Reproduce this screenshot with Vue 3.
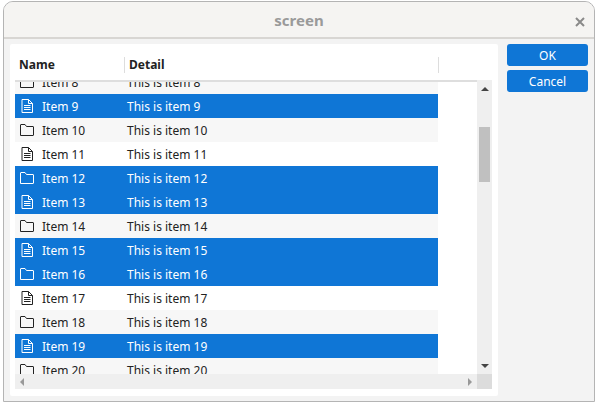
<script setup>
const selected = [9, 12, 13, 15, 16, 19]
const files = [9, 11, 13, 15, 17, 19]
const rows = Array.from({ length: 13 }, (_, i) => {
  const n = i + 8
  return { n, selected: selected.includes(n), file: files.includes(n), striped: n % 2 === 0 }
})
</script>

<template>
  <div class="window">
    <header class="titlebar">
      <span class="title">screen</span>
      <svg class="close" viewBox="0 0 10 10" width="10" height="10">
        <path d="M1 1 L9 9 M9 1 L1 9" stroke="#8a8a8a" stroke-width="2" fill="none" />
      </svg>
    </header>
    <div class="content">
      <section class="panel">
        <div class="head">
          <div class="col-name">Name</div>
          <div class="col-detail">Detail</div>
          <div class="col-rest"></div>
        </div>
        <div class="table-area">
          <div class="viewport">
            <div class="rows">
              <div
                v-for="r in rows"
                :key="r.n"
                class="row"
                :class="{ selected: r.selected, striped: r.striped }"
              >
                <svg v-if="r.file" class="icon" viewBox="0 0 16 16" width="16" height="16">
                  <path d="M3 1.5 H9.5 L13.5 5.5 V14.5 H3 Z M9.5 1.5 V5.5 H13.5 M5 7.5 H11.5 M5 9.5 H11.5 M5 11.5 H11.5" fill="none" stroke="currentColor" stroke-width="1" />
                </svg>
                <svg v-else class="icon" viewBox="0 0 16 16" width="16" height="16">
                  <path d="M1.5 13.5 V3 Q1.5 2.5 2 2.5 H6 L7.5 4.5 H14 Q14.5 4.5 14.5 5 V13 Q14.5 13.5 14 13.5 Z" fill="none" stroke="currentColor" stroke-width="1" />
                </svg>
                <span class="name">Item {{ r.n }}</span>
                <span class="detail">This is item {{ r.n }}</span>
              </div>
            </div>
          </div>
          <div class="vbar">
            <span class="arrow up"></span>
            <span class="thumb"></span>
            <span class="arrow down"></span>
          </div>
          <div class="hbar">
            <span class="arrow left"></span>
            <span class="arrow right"></span>
          </div>
          <div class="corner"></div>
        </div>
      </section>
      <aside class="actions">
        <button class="btn">OK</button>
        <button class="btn">Cancel</button>
      </aside>
    </div>
  </div>
</template>

<style>
html, body { margin: 0; background: #ffffff; }
</style>

<style scoped>
.window {
  box-sizing: border-box;
  width: 592px;
  height: 401px;
  margin: 1px 0 0 3px;
  border: 1px solid #b4b4b4;
  border-radius: 10px 10px 0 0;
  background: #f3f3f3;
  font-family: "Noto Sans", sans-serif;
  font-size: 12px;
  overflow: hidden;
}
.titlebar {
  height: 37px;
  box-sizing: border-box;
  background: #f5f4f2;
  border-bottom: 2px solid #d8d6d3;
  display: flex;
  align-items: center;
  justify-content: center;
  position: relative;
}
.title { font-weight: 700; font-size: 15px; color: #9a9a9a; }
.close { position: absolute; right: 9px; top: 15px; }
.content {
  display: flex;
  padding: 5px 6px 0 6px;
  gap: 9px;
}
.panel {
  width: 488px;
  height: 352px;
  background: #fff;
  border-radius: 2px;
  padding: 6px 6px 0 5px;
  box-sizing: border-box;
}
.head { display: flex; height: 30px; align-items: center; font-weight: 700; color: #222; }
.col-name { width: 109px; padding-left: 4px; box-sizing: border-box; height: 16px; line-height: 16px; }
.col-detail { width: 314px; padding-left: 4px; box-sizing: border-box; border-left: 1px solid #ddd; height: 16px; line-height: 16px; }
.col-rest { flex: 1; border-left: 1px solid #ddd; height: 16px; }
.table-area {
  display: grid;
  grid-template-columns: 462px 15px;
  grid-template-rows: 294px 15px;
}
.viewport { overflow: hidden; border-top: 0; position: relative; }
.viewport::before {
  content: "";
  position: absolute;
  left: 0;
  right: 0;
  top: 0;
  height: 2px;
  background: #dedede;
  z-index: 1;
}
.rows { margin-top: -10px; }
.row {
  width: 423px;
  height: 24px;
  display: flex;
  align-items: center;
  color: #222;
  background: #fff;
}
.row.striped { background: #f7f7f7; }
.row.selected { background: #0f76d6; color: #fff; }
.icon { margin-left: 4px; flex: none; }
.name { width: 85px; margin-left: 7px; flex: none; }
.detail { flex: 1; }
.vbar {
  background: #efefef;
  display: flex;
  flex-direction: column;
  align-items: center;
  position: relative;
}
.thumb {
  position: absolute;
  left: 2px;
  top: 47px;
  width: 11px;
  height: 55px;
  background: #c0c0c0;
}
.arrow { width: 0; height: 0; border: 4px solid transparent; position: absolute; }
.arrow.up { border-top: 0; border-bottom: 4px solid #444; top: 7px; left: 4px; }
.arrow.down { border-bottom: 0; border-top: 4px solid #444; bottom: 6px; left: 4px; }
.hbar { background: #efefef; position: relative; }
.arrow.left { border-left: 0; border-right: 4px solid #999; left: 5px; top: 4px; }
.arrow.right { border-right: 0; border-left: 4px solid #999; right: 5px; top: 4px; }
.corner { background: #dcdcdc; }
.actions { display: flex; flex-direction: column; gap: 4px; width: 82px; }
.btn {
  height: 22px;
  border: 0;
  padding: 0;
  border-radius: 3px;
  background: #0f76d6;
  color: #fff;
  font-family: inherit;
  font-size: 12px;
}
</style>
